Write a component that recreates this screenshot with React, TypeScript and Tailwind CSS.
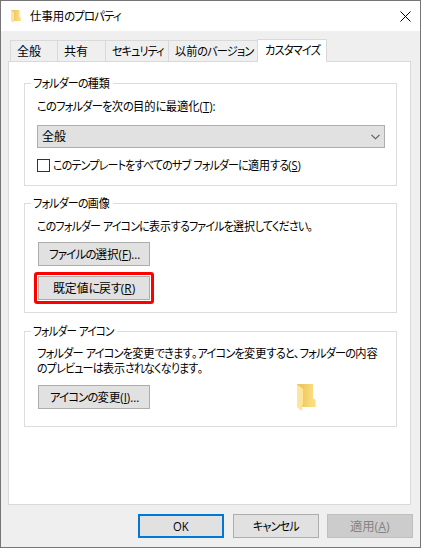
import React, { useLayoutEffect, useRef, useState } from "react";

type LabelProps = {
  text: string;
  width: number;
  className?: string;
};

// Kana runs are set tighter than kanji, "&" marks the accelerator key.
function Label({ text, width, className = "" }: LabelProps) {
  const ref = useRef<HTMLSpanElement>(null);
  const [scale, setScale] = useState(1);

  useLayoutEffect(() => {
    if (ref.current) setScale(width / ref.current.offsetWidth);
  }, [width, text]);

  const parts = text.match(/&.|[\u3040-\u30ff]+|[^&\u3040-\u30ff]+/g) ?? [];

  return (
    <span
      className={`block h-[15px] text-left leading-[15px] whitespace-nowrap ${className}`}
      style={{ width }}
    >
      <span
        ref={ref}
        className="inline-block origin-left align-top"
        style={{ transform: `scaleX(${scale})` }}
      >
        {parts.map((part, i) => {
          if (part[0] === "&") return <u key={i}>{part.slice(1)}</u>;
          if (/[\u3040-\u30ff]/.test(part))
            return (
              <span key={i} className="tracking-[-0.9px]">
                {part}
              </span>
            );
          return <span key={i}>{part}</span>;
        })}
      </span>
    </span>
  );
}

function FolderIcon({ className }: { className: string }) {
  return (
    <svg viewBox="0 0 19 27" preserveAspectRatio="none" className={className}>
      <defs>
        <linearGradient id="back" x1="0" x2="1" y1="0.4" y2="0.5">
          <stop offset="0.25" stopColor="#ecc860" />
          <stop offset="0.85" stopColor="#fbdc7e" />
        </linearGradient>
        <linearGradient id="front" x1="0" x2="1" y1="0" y2="1">
          <stop offset="0" stopColor="#ffe8a6" />
          <stop offset="1" stopColor="#fde294" />
        </linearGradient>
      </defs>
      <path d="M0 0H16V14L18.5 16V23H4L0 20Z" fill="url(#back)" />
      <path d="M0 0.5L6 5V20.5L5 21V27L0 23.5Z" fill="url(#front)" />
    </svg>
  );
}

function Button({ text, width, className = "" }: LabelProps) {
  return (
    <button
      className={`flex h-6 items-center justify-center border border-[#adadad] bg-[#e1e1e1] ${className}`}
    >
      <Label text={text} width={width} />
    </button>
  );
}

type GroupProps = {
  title: string;
  titleWidth: number;
  className: string;
  children: React.ReactNode;
};

function Group({ title, titleWidth, className, children }: GroupProps) {
  return (
    <section className={`border border-[#dcdcdc] pl-3 ${className}`}>
      <div className="-mt-2 -ml-[6px] w-fit bg-white pr-[3px] pl-[2px]">
        <Label text={title} width={titleWidth} />
      </div>
      {children}
    </section>
  );
}

const tabs = [
  { text: "全般", width: 24, className: "w-[47px]" },
  { text: "共有", width: 24, className: "w-[48px]" },
  { text: "セキュリティ", width: 52, className: "w-[63px]" },
  { text: "以前のバージョン", width: 78, className: "w-[89px]" },
];

export default function App() {
  return (
    <div className="flex h-[548px] w-[421px] flex-col border border-[#777475] bg-[#efefef] font-['Open_Sans','Noto_Sans_CJK_JP',sans-serif] text-xs text-black [font-feature-settings:'palt']">
      <header className="flex h-[30px] shrink-0 items-center bg-white pr-[9px] pl-[10px]">
        <FolderIcon className="h-[13px] w-[10px]" />
        <Label text="仕事用のプロパティ" width={91} className="ml-[9px]" />
        <svg
          viewBox="0 0 11 11"
          className="ml-auto size-[11px]"
          stroke="#000"
          strokeWidth="1"
        >
          <path d="M0.5 0.5L10.5 10.5M10.5 0.5L0.5 10.5" />
        </svg>
      </header>

      <nav className="mt-2 flex h-[23px] shrink-0 items-end pl-[9px]">
        {tabs.map((tab) => (
          <div
            key={tab.text}
            className={`mb-px flex h-[21px] items-center border-t border-l border-[#d9d9d9] pl-[6px] ${tab.className}`}
          >
            <Label text={tab.text} width={tab.width} />
          </div>
        ))}
        <div className="z-10 h-[23px] w-[70px] border-x border-t border-[#d9d9d9] bg-white pt-[3px] pl-[7px]">
          <Label text="カスタマイズ" width={55} />
        </div>
      </nav>

      <main className="-mt-px ml-[7px] h-[444px] w-[403px] shrink-0 border border-[#d9d9d9] bg-white pt-[21px] pl-[15px]">
        <Group title="フォルダーの種類" titleWidth={77} className="h-[103px] w-[373px]">
          <Label
            text="このフォルダーを次の目的に最適化(&T):"
            width={178}
            className="mt-2"
          />
          <div className="mt-[11px] flex h-[23px] w-[348px] items-center justify-between border border-[#adadad] bg-[#e1e1e1] pr-1 pl-1">
            <Label text="全般" width={24} />
            <svg
              viewBox="0 0 9 6"
              className="h-[6px] w-[9px]"
              fill="none"
              stroke="#555"
              strokeWidth="1.1"
            >
              <path d="M0.5 0.8L4.5 4.8L8.5 0.8" />
            </svg>
          </div>
          <div className="mt-[10px] flex items-center">
            <span className="size-[13px] border border-[#333] bg-white" />
            <Label
              text="このテンプレートをすべてのサブ フォルダーに適用する(&S)"
              width={248}
              className="ml-[3px]"
            />
          </div>
        </Group>

        <Group title="フォルダーの画像" titleWidth={77} className="mt-[17px] h-[110px] w-[373px]">
          <Label
            text="このフォルダー アイコンに表示するファイルを選択してください。"
            width={276}
            className="mt-2"
          />
          <Button
            text="ファイルの選択(&F)..."
            width={91}
            className="mt-2 ml-px w-[112px]"
          />
          <div className="mt-[6px] -ml-[3px] flex h-8 w-[120px] items-center justify-center rounded-[3px] border-[3px] border-[#fe0000]">
            <Button text="既定値に戻す(&R)" width={82} className="w-[112px] shrink-0" />
          </div>
        </Group>

        <Group title="フォルダー アイコン" titleWidth={81} className="mt-[18px] h-[96px] w-[373px]">
          <Label
            text="フォルダー アイコンを変更できます。アイコンを変更すると、フォルダーの内容"
            width={341}
            className="mt-[7px]"
          />
          <Label text="のプレビューは表示されなくなります。" width={166} />
          <div className="mt-[9px] flex items-start">
            <Button text="アイコンの変更(&I)..." width={89} className="ml-px w-[112px]" />
            <FolderIcon className="-mt-px ml-[147px] h-[27px] w-[19px]" />
          </div>
        </Group>
      </main>

      <footer className="mt-[9px] flex shrink-0 pl-[137px]">
        <button className="flex h-6 w-[86px] items-center justify-center border-2 border-[#0078d7] bg-[#e1e1e1]">
          <Label text="OK" width={16} />
        </button>
        <Button text="キャンセル" width={46} className="ml-[9px] w-[86px]" />
        <button className="ml-2 flex h-6 w-[86px] items-center justify-center border border-[#bfbfbf] bg-[#cccccc] text-[#838383]">
          <Label text="適用(&A)" width={40} />
        </button>
      </footer>
    </div>
  );
}
